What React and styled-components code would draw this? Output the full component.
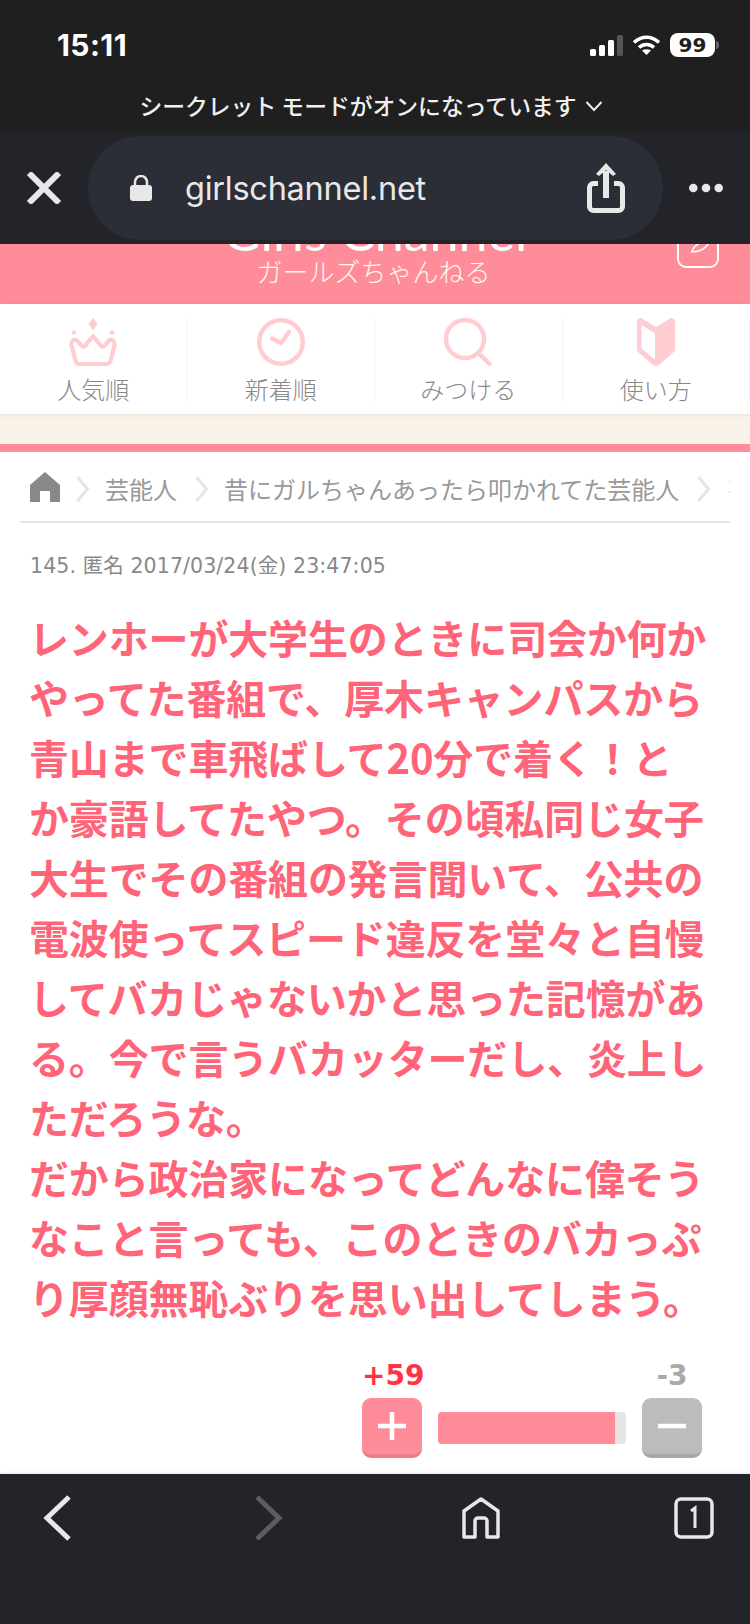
import React from "react";
import styled, { createGlobalStyle } from "styled-components";

const GlobalStyle = createGlobalStyle`
  html, body {
    margin: 0;
    padding: 0;
    background: #fff;
  }
  * {
    box-sizing: border-box;
  }
`;

const jp = `"Noto Sans CJK JP", "Liberation Sans", sans-serif`;

const Screen = styled.div`
  width: 750px;
  height: 1624px;
  display: flex;
  flex-direction: column;
  overflow: hidden;
  font-family: ${jp};
`;

const StatusArea = styled.div`
  height: 132px;
  flex: none;
  background: #1f1f1f;
  color: #fff;
  display: flex;
  flex-direction: column;
`;

const StatusRow = styled.div`
  height: 86px;
  padding: 27px 31px 0 57px;
  display: flex;
  justify-content: space-between;
  align-items: flex-start;
`;

const Clock = styled.span`
  font-family: Inter, sans-serif;
  font-weight: 700;
  font-size: 30px;
  line-height: 36px;
  letter-spacing: 0.4px;
`;

const StatusIcons = styled.div`
  display: flex;
  align-items: center;
  gap: 9px;
  height: 36px;
`;

const Battery = styled.span`
  width: 45px;
  height: 24px;
  border-radius: 8px;
  background: #fff;
  color: #1f1f1f;
  font-family: "DejaVu Sans", sans-serif;
  font-size: 20px;
  font-weight: 700;
  line-height: 24px;
  text-align: center;
  position: relative;
  margin-right: 4px;

  &::after {
    content: "";
    position: absolute;
    right: -4px;
    top: 8px;
    width: 3px;
    height: 8px;
    border-radius: 0 3px 3px 0;
    background: #666;
  }
`;

const PrivateNote = styled.div`
  display: flex;
  justify-content: center;
  align-items: center;
  gap: 8px;
  height: 40px;
  padding-right: 8px;
  font-size: 22.8px;
  font-weight: 500;
  line-height: 40px;
  color: #f0f0f0;
`;

const AddressBar = styled.div`
  height: 112px;
  flex: none;
  background: #23242a;
  display: flex;
  align-items: flex-start;
  padding-top: 4px;
  position: relative;
  z-index: 2;
`;

const CloseSlot = styled.div`
  width: 88px;
  height: 104px;
  display: flex;
  align-items: center;
  justify-content: center;
`;

const Pill = styled.div`
  width: 575px;
  height: 104px;
  border-radius: 52px;
  background: #2b2e37;
  display: flex;
  align-items: center;
  padding-left: 42px;
  padding-right: 38px;
`;

const Url = styled.span`
  flex: 1;
  margin-left: 33px;
  color: #e8e8e8;
  font-family: Inter, sans-serif;
  font-size: 32.5px;
  letter-spacing: -0.25px;
`;

const MoreSlot = styled.div`
  flex: 1;
  height: 104px;
  display: flex;
  align-items: center;
  justify-content: center;
  padding-right: 2px;
`;

const Page = styled.div`
  flex: 1;
  min-height: 0;
  overflow: hidden;
  background: #fff;
`;

const SiteHeader = styled.div`
  height: 60px;
  background: #ff8c99;
  position: relative;
  overflow: hidden;
  color: #fff;
  text-align: center;
`;

const LogoLatin = styled.div`
  font-family: Lato, sans-serif;
  font-weight: 400;
  font-size: 52px;
  line-height: 56px;
  height: 53px;
  margin-top: -41px;
`;

const LogoKana = styled.div`
  font-size: 26px;
  font-weight: 300;
  line-height: 30px;
  margin-left: -3px;
  opacity: 0.92;
`;

const EditIcon = styled.svg`
  position: absolute;
  top: -20px;
  right: 30px;
`;

const Nav = styled.nav`
  height: 110px;
  background: #fff;
  display: grid;
  grid-template-columns: repeat(4, 187.5px);
  padding-top: 14px;
  box-shadow: 0 1px 4px rgba(0, 0, 0, 0.08);
  position: relative;
`;

const NavItem = styled.div`
  height: 84px;
  display: flex;
  flex-direction: column;
  align-items: center;
  border-right: 1px solid #f3f3f3;
`;

const NavIcon = styled.svg`
  display: block;
  height: 48px;
  flex: none;
`;

const NavLabel = styled.span`
  font-size: 24px;
  line-height: 30px;
  margin-top: 8px;
  color: #888;
  font-weight: 300;
`;

const Banner = styled.div`
  height: 30px;
  background: #f9f2e9;
`;

const PinkRule = styled.div`
  height: 8px;
  background: #ff8c99;
`;

const Crumbs = styled.div`
  margin: 0 20px;
  height: 71px;
  border-bottom: 2px solid #e5e5e5;
  padding: 20px 0 0 10px;
  display: flex;
  align-items: flex-start;
  overflow: hidden;
  white-space: nowrap;
`;

const CrumbHome = styled.svg`
  flex: none;
  margin-right: -2px;
`;

const CrumbText = styled.span`
  font-size: 24px;
  line-height: 34px;
  color: #999;
  margin-left: 15px;
  flex: none;
`;

const CrumbArrow = styled.svg`
  margin-left: 18px;
  margin-top: 4px;
  flex: none;
`;

const CrumbCut = styled.span`
  font-size: 24px;
  line-height: 34px;
  color: #ff8c99;
  margin-left: 17px;
  flex: none;
`;

const Comment = styled.article`
  padding: 0 30px;
`;

const Meta = styled.div`
  margin-top: 29px;
  font-family: "DejaVu Sans", ${jp};
  font-size: 20.5px;
  line-height: 28px;
  letter-spacing: 0.1px;
  color: #888;
`;

const Body = styled.p`
  margin: 27px 0 0 -1px;
  font-size: 40px;
  line-height: 60px;
  font-weight: 700;
  letter-spacing: -0.15px;
  color: #ff6478;
  white-space: nowrap;
`;

const Votes = styled.div`
  margin-top: 33px;
  margin-left: 332px;
  display: grid;
  grid-template-columns: 60px 188px 60px;
  column-gap: 16px;
  row-gap: 6px;
  justify-content: start;
  align-items: center;
`;

const Count = styled.span`
  font-family: "DejaVu Sans", sans-serif;
  font-weight: 700;
  font-size: 28px;
  line-height: 32px;
  text-align: center;
  white-space: nowrap;
  color: ${(p) => p.$color};
`;

const VoteButton = styled.div`
  grid-row: 2;
  width: 60px;
  height: 60px;
  border-radius: 9px;
  background: ${(p) => p.$bg};
  border-bottom: 4px solid ${(p) => p.$edge};
  display: flex;
  align-items: center;
  justify-content: center;
`;

const Meter = styled.div`
  grid-row: 2;
  height: 32px;
  border-radius: 4px;
  overflow: hidden;
  background: #e5e5e5;
`;

const MeterFill = styled.div`
  height: 100%;
  background: #ff8c99;
`;

const BottomBar = styled.div`
  height: 150px;
  flex: none;
  background: #23242a;
  padding-top: 11px;
  display: grid;
  grid-template-columns: repeat(4, 1fr);
  position: relative;
  box-shadow: 0 -1px 3px rgba(0, 0, 0, 0.1);
`;

const BarSlot = styled.div`
  height: 66px;
  display: flex;
  align-items: center;
  justify-content: center;
  margin-left: ${(p) => p.$shift || 0}px;
`;

const lines = [
  "レンホーが大学生のときに司会か何か",
  "やってた番組で、厚木キャンパスから",
  "青山まで車飛ばして20分で着く！と",
  "か豪語してたやつ。その頃私同じ女子",
  "大生でその番組の発言聞いて、公共の",
  "電波使ってスピード違反を堂々と自慢",
  "してバカじゃないかと思った記憶があ",
  "る。今で言うバカッターだし、炎上し",
  "ただろうな。",
  "だから政治家になってどんなに偉そう",
  "なこと言っても、このときのバカっぷ",
  "り厚顔無恥ぶりを思い出してしまう。",
];

function Arrow() {
  return (
    <CrumbArrow width="14" height="26" viewBox="0 0 14 26">
      <path d="M1.5 1l10 12-10 12" fill="none" stroke="#e5e5e5" strokeWidth="3" />
    </CrumbArrow>
  );
}

export default function App() {
  return (
    <Screen>
      <GlobalStyle />
      <StatusArea>
        <StatusRow>
          <Clock>15:11</Clock>
          <StatusIcons>
            <svg width="33" height="24" viewBox="0 0 33 24">
              <rect x="0" y="16" width="6" height="7" rx="1.5" fill="#fff" />
              <rect x="9" y="12" width="6" height="11" rx="1.5" fill="#fff" />
              <rect x="18" y="7" width="6" height="16" rx="1.5" fill="#fff" />
              <rect x="27" y="2" width="6" height="21" rx="1.5" fill="#555" />
            </svg>
            <svg width="29" height="22" viewBox="0 0 29 22">
              <path d="M2 8.5c7.500-7 17.500-7 25 0" fill="none" stroke="#fff" strokeWidth="3.6" />
              <path d="M7 13.500c4.500-4 10.500-4 15 0" fill="none" stroke="#fff" strokeWidth="3.6" />
              <path d="M14.500 21l-4.500-4.500c2.700-1.800 6.300-1.800 9 0z" fill="#fff" />
            </svg>
            <Battery>99</Battery>
          </StatusIcons>
        </StatusRow>
        <PrivateNote>
          シークレット モードがオンになっています
          <svg width="18" height="12" viewBox="0 0 18 12">
            <path d="M1.500 2L9 10l7.500-8" fill="none" stroke="#f0f0f0" strokeWidth="2" />
          </svg>
        </PrivateNote>
      </StatusArea>
      <AddressBar>
        <CloseSlot>
          <svg width="34" height="32" viewBox="0 0 34 32">
            <path d="M2 1l30 30M32 1L2 31" stroke="#e8e8e8" strokeWidth="6" />
          </svg>
        </CloseSlot>
        <Pill>
          <svg width="22" height="26" viewBox="0 0 22 26">
            <path d="M5 11V7a6 6 0 0 1 12 0v4" fill="none" stroke="#e8e8e8" strokeWidth="2.500" />
            <rect x="0" y="10" width="22" height="16" rx="3" fill="#e8e8e8" />
          </svg>
          <Url>girlschannel.net</Url>
          <svg width="38" height="50" viewBox="0 0 38 50">
            <path d="M11 20.500H6.500a4 4 0 0 0-4 4v19a4 4 0 0 0 4 4h25a4 4 0 0 0 4-4v-19a4 4 0 0 0-4-4H27" fill="none" stroke="#e8e8e8" strokeWidth="5" />
            <path d="M19 35V8" stroke="#e8e8e8" strokeWidth="6" />
            <path d="M19 0l10 11-3 2-7-6-7 6-3-2z" fill="#e8e8e8" />
          </svg>
        </Pill>
        <MoreSlot>
          <svg width="34" height="10" viewBox="0 0 34 10">
            <circle cx="4.300" cy="5" r="4.300" fill="#e8e8e8" />
            <circle cx="17" cy="5" r="4.300" fill="#e8e8e8" />
            <circle cx="29.700" cy="5" r="4.300" fill="#e8e8e8" />
          </svg>
        </MoreSlot>
      </AddressBar>
      <Page>
        <SiteHeader>
          <LogoLatin>Girls Channel</LogoLatin>
          <LogoKana>ガールズちゃんねる</LogoKana>
          <EditIcon width="44" height="45" viewBox="0 0 44 45">
            <path d="M2 2v33a8 8 0 0 0 8 8h24a8 8 0 0 0 8-8V2" fill="none" stroke="#fff" strokeWidth="2" />
            <path d="M16 28c1-4 5-8 10-10h7c-2 6-9 10-17 10z" fill="none" stroke="#fff" strokeWidth="1.600" />
          </EditIcon>
        </SiteHeader>
        <Nav>
          <NavItem>
            <NavIcon width="48" viewBox="0 0 48 48">
              <path d="M24 0l4.500 6-4.500 6.500L19.500 6z" fill="#ffccd2" />
              <circle cx="5" cy="14.500" r="2.200" fill="#ffccd2" />
              <circle cx="43" cy="14.500" r="2.200" fill="#ffccd2" />
              <path d="M2.500 27c-.8-4 3.500-7 6-4l4.500 5c1 1 2 1 3 0l8-10 8 10c1 1 2 1 3 0l4.500-5c2.500-3 6.800 0 6 4L42 41c-.5 3-2.500 5-5 5H11c-2.500 0-4.500-2-5-5z" fill="none" stroke="#ffccd2" strokeWidth="4.200" strokeLinejoin="round" />
            </NavIcon>
            <NavLabel>人気順</NavLabel>
          </NavItem>
          <NavItem>
            <NavIcon width="48" viewBox="0 0 48 48">
              <circle cx="24" cy="24" r="21.800" fill="none" stroke="#ffccd2" strokeWidth="4.400" />
              <path d="M15 20.500l9 4.500 8-11" fill="none" stroke="#ffccd2" strokeWidth="4.400" strokeLinecap="round" strokeLinejoin="round" />
            </NavIcon>
            <NavLabel>新着順</NavLabel>
          </NavItem>
          <NavItem>
            <NavIcon width="48" viewBox="0 0 48 48">
              <circle cx="21" cy="21" r="19" fill="none" stroke="#ffccd2" strokeWidth="4.400" />
              <path d="M35 35.500l10.500 10.500" fill="none" stroke="#ffccd2" strokeWidth="4.400" strokeLinecap="round" />
            </NavIcon>
            <NavLabel>みつける</NavLabel>
          </NavItem>
          <NavItem>
            <NavIcon width="38" viewBox="0 0 38 48">
              <path d="M0 4c0-3 2.500-5 5-3.500l14 8.500 14-8.500C35.500-1 38 1 38 4v27c0 1.500-.7 2.800-2 3.800L22 46.800c-1.800 1.500-4.200 1.500-6 0L2 34.800C.7 33.800 0 32.500 0 31z" fill="#ffccd2" />
              <path d="M4.500 7l13.500 8.500V41.500L5 31c-.4-.4-.5-.8-.5-1.400z" fill="#fff" />
            </NavIcon>
            <NavLabel>使い方</NavLabel>
          </NavItem>
        </Nav>
        <Banner />
        <PinkRule />
        <Crumbs>
          <CrumbHome width="30" height="30" viewBox="0 0 30 30">
            <path d="M15 0l15 13v17H20V19H10v11H0V13z" fill="#888" />
          </CrumbHome>
          <Arrow />
          <CrumbText>芸能人</CrumbText>
          <Arrow />
          <CrumbText>昔にガルちゃんあったら叩かれてた芸能人</CrumbText>
          <Arrow />
          <CrumbCut>芸能人</CrumbCut>
        </Crumbs>
        <Comment>
          <Meta>145. 匿名 2017/03/24(金) 23:47:05</Meta>
          <Body>
            {lines.map((line, i) => (
              <React.Fragment key={i}>
                {line}
                <br />
              </React.Fragment>
            ))}
          </Body>
          <Votes>
            <Count $color="#ff3344">+59</Count>
            <span />
            <Count $color="#aaa">-3</Count>
            <VoteButton $bg="#ff8c99" $edge="#e87f8b">
              <svg width="28" height="28" viewBox="0 0 28 28">
                <path d="M14 0v28M0 14h28" stroke="#fff" strokeWidth="4.500" />
              </svg>
            </VoteButton>
            <Meter>
              <MeterFill style={{ width: `${(59 / 62.8) * 100}%` }} />
            </Meter>
            <VoteButton $bg="#bcbcbc" $edge="#a8a8a8">
              <svg width="28" height="6" viewBox="0 0 28 6">
                <path d="M0 3h28" stroke="#fff" strokeWidth="4.500" />
              </svg>
            </VoteButton>
          </Votes>
        </Comment>
      </Page>
      <BottomBar>
        <BarSlot $shift={-73}>
          <svg width="28" height="46" viewBox="0 0 28 46">
            <path d="M26 2L4 23l22 21" fill="none" stroke="#e8e8e8" strokeWidth="5" />
          </svg>
        </BarSlot>
        <BarSlot $shift={-24}>
          <svg width="28" height="46" viewBox="0 0 28 46">
            <path d="M2 2l22 21L2 44" fill="none" stroke="#5c5d62" strokeWidth="5" />
          </svg>
        </BarSlot>
        <BarSlot $shift={25}>
          <svg width="38" height="42" viewBox="0 0 38 42">
            <path d="M2 40V14L19 2l17 12v26H25V24a3 3 0 0 0-3-3h-6a3 3 0 0 0-3 3v16z" fill="none" stroke="#e8e8e8" strokeWidth="3.500" strokeLinejoin="round" />
          </svg>
        </BarSlot>
        <BarSlot $shift={76}>
          <svg width="40" height="42" viewBox="0 0 40 42">
            <rect x="2" y="2" width="36" height="38" rx="5" fill="none" stroke="#e8e8e8" strokeWidth="3.500" />
            <path d="M17 14l4-3v20" fill="none" stroke="#e8e8e8" strokeWidth="3" />
          </svg>
        </BarSlot>
      </BottomBar>
    </Screen>
  );
}
